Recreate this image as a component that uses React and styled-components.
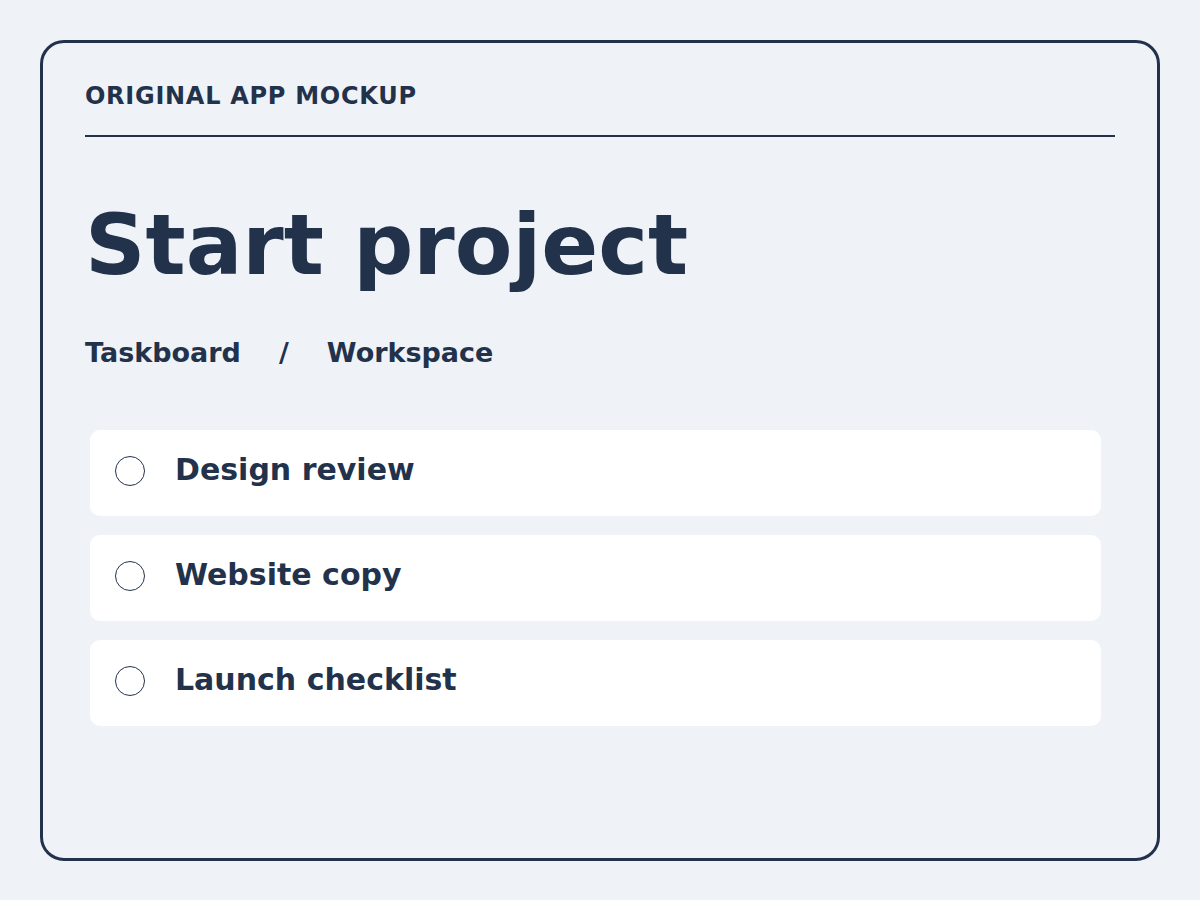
import React from "react";
import styled, { createGlobalStyle } from "styled-components";

const GlobalStyle = createGlobalStyle`
  html, body {
    margin: 0;
    padding: 0;
    background: #eff3f8;
  }
  body {
    font-family: "DejaVu Sans", "Liberation Sans", sans-serif;
    color: #23324b;
  }
`;

const Page = styled.div`
  width: 1200px;
  height: 900px;
  box-sizing: border-box;
  padding: 40px;
`;

const Frame = styled.main`
  box-sizing: border-box;
  height: 821px;
  border: 3px solid #23324b;
  border-radius: 24px;
  padding: 0 42px;
  display: flex;
  flex-direction: column;
`;

const Header = styled.header`
  padding-top: 39px;
  padding-bottom: 24px;
  border-bottom: 2px solid #23324b;
  font-size: 24px;
  font-weight: 700;
  letter-spacing: 0.03em;
  line-height: 29px;
`;

const Title = styled.h1`
  margin: 60px 0 0;
  font-size: 84px;
  line-height: 96px;
  font-weight: 700;
`;

const Breadcrumbs = styled.nav`
  margin-top: 44px;
  display: flex;
  gap: 38px;
  font-size: 27px;
  font-weight: 700;
  line-height: 32px;
`;

const TaskList = styled.ul`
  list-style: none;
  margin: 61px 0 0 5px;
  padding: 0;
  width: 1011px;
  display: flex;
  flex-direction: column;
  gap: 19px;
`;

const TaskCard = styled.li`
  height: 86px;
  box-sizing: border-box;
  background: #ffffff;
  border-radius: 10px;
  padding: 0 25px 6px;
  display: flex;
  align-items: center;
  gap: 30px;
`;

const Check = styled.span`
  box-sizing: border-box;
  width: 30px;
  height: 30px;
  margin-top: 2px;
  border: 1.8px solid #23324b;
  border-radius: 50%;
  flex: none;
`;

const TaskName = styled.span`
  font-size: 30px;
  font-weight: 700;
  line-height: 36px;
`;

const tasks = ["Design review", "Website copy", "Launch checklist"];

export default function App() {
  return (
    <>
      <GlobalStyle />
      <Page>
        <Frame>
          <Header>ORIGINAL APP MOCKUP</Header>
          <Title>Start project</Title>
          <Breadcrumbs>
            <span>Taskboard</span>
            <span>/</span>
            <span>Workspace</span>
          </Breadcrumbs>
          <TaskList>
            {tasks.map((t) => (
              <TaskCard key={t}>
                <Check />
                <TaskName>{t}</TaskName>
              </TaskCard>
            ))}
          </TaskList>
        </Frame>
      </Page>
    </>
  );
}
